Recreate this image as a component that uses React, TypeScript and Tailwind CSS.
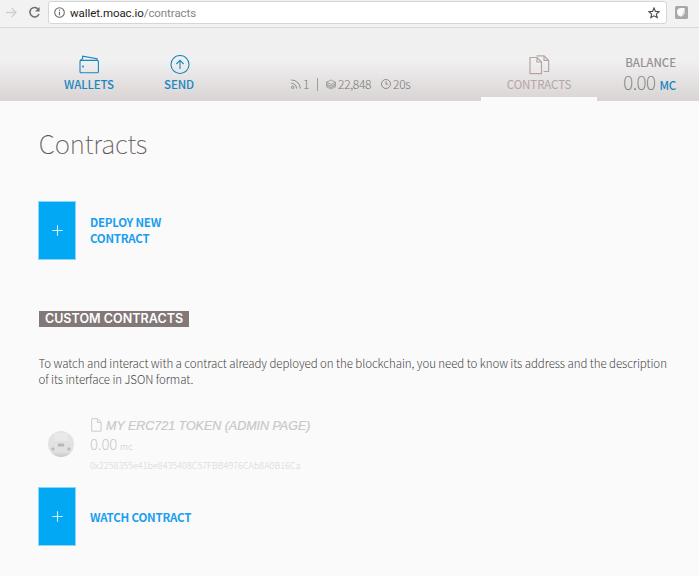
import React from "react";

const sans = "font-['Noto_Sans_CJK_SC','Noto_Sans',sans-serif]";

function PlusTile() {
  return (
    <div className="flex h-[59px] w-[38px] shrink-0 items-center justify-center border border-[#8bd5f9] bg-[#02a8f3]">
      <svg width="11" height="11" viewBox="0 0 11 11" stroke="#d5f0fd" strokeWidth="1.1">
        <path d="M5.5 0.3v10.4M0.3 5.5h10.4" />
      </svg>
    </div>
  );
}

function BrowserBar() {
  return (
    <div className="flex h-[28px] items-start border-b border-[#d9d9d9] bg-[#f2f2f2]">
      <svg className="ml-[6px] mt-[7px]" width="11" height="11" viewBox="0 0 11 11" fill="none" stroke="#cfcfcf" strokeWidth="1.3">
        <path d="M0 5.5h10M5.5 1l4.5 4.5L5.5 10" />
      </svg>
      <svg className="ml-[11px] mt-[6px]" width="13" height="13" viewBox="0 0 13 13" fill="none">
        <path d="M10.3 3.2A4.7 4.7 0 1 0 11 8" stroke="#6e6e6e" strokeWidth="1.5" />
        <path d="M11.6 1v4.6H7z" fill="#6e6e6e" />
      </svg>
      <div className="ml-[7px] mt-px flex h-[23px] w-[619px] items-center rounded-[3px] border border-[#d6d6d6] bg-white pl-[5px] pr-[6px]">
        <svg width="11" height="11" viewBox="0 0 11 11" fill="none" stroke="#6a6a6a">
          <circle cx="5.5" cy="5.5" r="4.8" strokeWidth="1.1" />
          <path d="M5.5 4.7v3.6M5.5 2.6v1.2" strokeWidth="1.2" />
        </svg>
        <div className="ml-[5px] whitespace-nowrap font-[Roboto,sans-serif] text-[11.5px] leading-[16px] tracking-[-0.07px] text-[#858585]">
          <span className="text-[#1c1c1c]">wallet.moac.io</span>/contracts
        </div>
        <svg className="ml-auto" width="12" height="12" viewBox="0 0 12 12" fill="none" stroke="#4c4c4c" strokeWidth="1.1">
          <path d="M6 1l1.4 3.4 3.7.3-2.8 2.4.9 3.6L6 8.8l-3.2 1.9.9-3.6L.9 4.7l3.7-.3z" />
        </svg>
      </div>
      <svg className="ml-[8px] mt-[6px]" width="13" height="13" viewBox="0 0 13 13">
        <rect width="13" height="13" rx="1.5" fill="#a8a8a8" />
        <path d="M2 6Q2 2 6 2H9.6Q10.8 6 8.8 8.8Q7.4 10.8 5.4 10.4Q2 9.6 2 6z" fill="#fafafa" />
        <path d="M9.4 2Q10.8 5 9.2 7.8Q8 10.2 6 10.5Q9 7 9.4 2z" fill="#d4d4d4" />
      </svg>
    </div>
  );
}

function Header() {
  return (
    <header className="flex h-[73px] bg-linear-to-b from-[#f0f0f0] from-45% to-[#d9d4d3]">
      <div className="ml-[58px] flex w-[62px] flex-col items-center pt-[27px] text-[#1a86c1]">
        <svg width="21" height="20" viewBox="0 0 21 20" fill="none" stroke="currentColor" strokeWidth="1.1">
          <rect x="1" y="5.4" width="18.4" height="12.4" rx="1" />
          <path d="M1.2 5.4Q2 4 3.6 4V1.2L18 3.8V5.4" />
          <circle cx="4" cy="11.4" r="1" fill="currentColor" stroke="none" />
        </svg>
        <span className="mt-[1px] text-[11.5px] font-medium leading-[16px] tracking-[-0.12px]">WALLETS</span>
      </div>
      <div className="ml-[28px] flex w-[62px] flex-col items-center pt-[27px] text-[#1a86c1]">
        <svg className="ml-px" width="20" height="20" viewBox="0 0 20 20" fill="none" stroke="currentColor" strokeWidth="1.1">
          <circle cx="10" cy="9.5" r="9" />
          <path d="M10 14V5.4M6.4 9L10 5.2 13.6 9" />
        </svg>
        <span className="mt-[1px] text-[11.5px] font-medium leading-[16px] tracking-[-0.12px]">SEND</span>
      </div>
      <div className="ml-[81px] flex w-[190px] items-center self-start whitespace-nowrap pt-[48px] text-[12px] font-light leading-[16px] tracking-[-0.35px] text-[#777]">
        <svg width="10" height="10" viewBox="0 0 10 10" fill="none" stroke="currentColor" strokeWidth="0.8">
          <circle cx="1.7" cy="8.3" r="1.2" />
          <path d="M.4 4.3a5.2 5.2 0 0 1 5.2 5.3M.4 1a8.5 8.5 0 0 1 8.8 8.6" />
        </svg>
        <span className="ml-[2px]">1</span>
        <span className="ml-[8px] h-[13px] w-px bg-[#9e9e9e]" />
        <svg className="ml-[8px]" width="10" height="11" viewBox="0 0 10 11" fill="none" stroke="currentColor" strokeWidth="0.6">
          <path d="M5 1L9.4 3.2 5 5.4.6 3.2zM.6 5L5 7.2 9.4 5M.6 6.4L5 8.6l4.4-2.2M.6 7.8L5 10l4.4-2.2M.6 3.2v4.6M9.4 3.2v4.6" />
        </svg>
        <span className="ml-[2px]">22,848</span>
        <svg className="ml-[10px]" width="10" height="10" viewBox="0 0 10 10" fill="none" stroke="currentColor" strokeWidth="0.8">
          <circle cx="5" cy="5" r="4.5" />
          <path d="M5 2.2v3h2" />
        </svg>
        <span className="ml-[2px]">20s</span>
      </div>
      <div className="flex w-[116px] flex-col items-center border-b-4 border-[#fafafa] pt-[27px] text-[#b5a5a3]">
        <svg width="21" height="20" viewBox="0 0 21 20" fill="none" stroke="currentColor" strokeWidth="1.2">
          <path d="M1 2.5h7l4.5 4.5v11.6H1zM8 2.5V7h4.5M7.5.8h7.5l4.6 4.5v11.2h-5M15 .8v4.5h4.6" />
        </svg>
        <span className="mt-[1px] text-[11.5px] font-normal leading-[16px] tracking-[-0.08px]">CONTRACTS</span>
      </div>
      <div className="ml-auto mr-[23px] flex flex-col items-end whitespace-nowrap pt-[26px]">
        <span className="text-[11.5px] font-medium leading-[16px] tracking-[-0.06px] text-[#979292]">BALANCE</span>
        <div className="flex items-baseline leading-[24px]">
          <span className="text-[19px] font-thin tracking-[-0.5px] text-[#666]">0.00</span>
          <span className="ml-[4px] text-[11.5px] font-medium tracking-[-0.2px] text-[#1a86c1]">MC</span>
        </div>
      </div>
    </header>
  );
}

function TokenRow() {
  return (
    <div className="mt-[29px] flex h-[58px]">
      <svg className="ml-[10px] mt-[15px] shrink-0" width="27" height="27" viewBox="0 0 27 27">
        <defs>
          <linearGradient id="orb" x1="0" y1="0" x2="0" y2="1">
            <stop offset="0" stopColor="#e4e4e4" />
            <stop offset="0.8" stopColor="#e0e0e0" />
            <stop offset="1" stopColor="#c8c8c8" />
          </linearGradient>
        </defs>
        <circle cx="13" cy="13" r="13" fill="url(#orb)" />
        <path d="M6.5 2h13v7.8h-13z" fill="#ebebeb" opacity=".7" />
        <rect x="9.8" y="12.5" width="6.4" height="3" rx=".5" fill="#b8b8b8" />
        <circle cx="5" cy="18" r="1.7" fill="#bcbcbc" />
        <circle cx="21" cy="18" r="1.7" fill="#bcbcbc" />
      </svg>
      <div className="ml-[15px] whitespace-nowrap">
        <div className="flex h-[20px] items-center">
          <svg className="mb-[2px] ml-px" width="11" height="14" viewBox="0 0 11 14" fill="none" stroke="#cccccc">
            <path d="M.7.7h5.8l3.6 3.7v8.8H.7zM6.4.7v3.8h3.7" />
          </svg>
          <span className="ml-[4px] font-['Liberation_Sans',Arial,sans-serif] text-[12.5px] italic leading-[18px] tracking-[-0.02px] text-[#c8c8c8] [-webkit-text-stroke:0.2px_#c8c8c8]">MY ERC721 TOKEN (ADMIN PAGE)</span>
        </div>
        <div className="-mt-px flex items-baseline leading-[18px] text-[#c8c8c8]">
          <span className="text-[15px] font-light tracking-[-0.2px]">0.00</span>
          <span className="ml-[3px] text-[9px] font-light">mc</span>
        </div>
        <div className="text-[9px] font-light leading-[20px] tracking-[0.03px] text-[#d6d6d6]">0x2258355e41be8435408C57FBB4976CAb8A0B16Ca</div>
      </div>
    </div>
  );
}

export default function App() {
  return (
    <div className={`h-[576px] w-[699px] overflow-hidden bg-[#fafafa] ${sans}`}>
      <BrowserBar />
      <Header />
      <main className="pl-[38px]">
        <h1 className="ml-[0.7px] pt-[24px] text-[26px] font-thin leading-[36px] tracking-[-0.15px] text-[#5c5454] [-webkit-text-stroke:0.1px_#6f6666]">Contracts</h1>
        <div className="mt-[40px] flex items-center">
          <PlusTile />
          <div className="mb-[2px] ml-[14px] text-[11.5px] font-bold leading-[16px] tracking-[-0.23px] text-[#1a9ef0]">DEPLOY NEW<br />CONTRACT</div>
        </div>
        <h2 className="ml-px mt-[51px] flex h-[16px] w-[150px] items-center justify-center whitespace-nowrap bg-[#827878] font-[Inter,sans-serif] text-[12.5px] font-semibold leading-[16px] tracking-[0.04px] text-white">CUSTOM CONTRACTS</h2>
        <p className="ml-[0.5px] mt-[28px] whitespace-nowrap text-[11.5px] font-light leading-[16px] tracking-[-0.07px] text-[#444]">
          To watch and interact with a contract already deployed on the blockchain, you need to know its address and the description<br />
          of its interface in JSON format.
        </p>
        <TokenRow />
        <div className="mt-[13px] flex items-center">
          <PlusTile />
          <div className="ml-[14px] text-[11.5px] font-bold leading-[16px] tracking-[-0.2px] text-[#1a9ef0]">WATCH CONTRACT</div>
        </div>
      </main>
    </div>
  );
}
